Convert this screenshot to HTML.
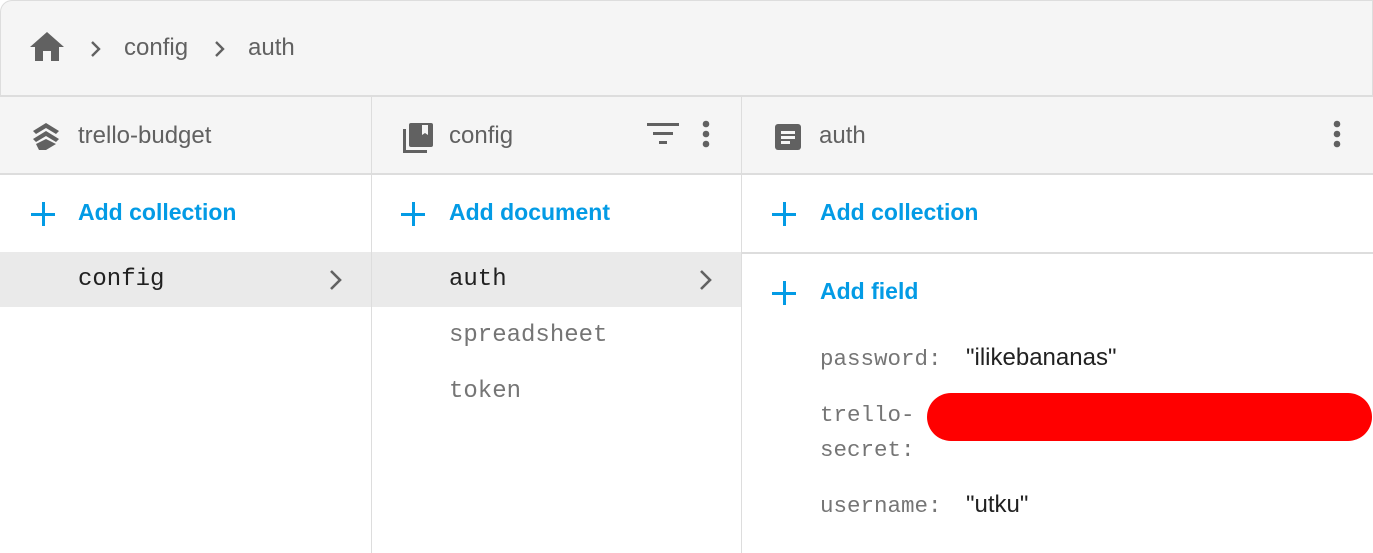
<!DOCTYPE html>
<html><head><style>
*{margin:0;padding:0;box-sizing:border-box}
body{width:1373px;height:553px;background:#fff;font-family:"Liberation Sans",sans-serif;overflow:hidden;position:relative}
.top{position:absolute;left:0;top:0;width:1373px;height:97px;background:#f5f5f5;border:1px solid #ddd;border-bottom:2px solid #ddd;border-top-left-radius:12px}
.t{position:absolute;white-space:nowrap}
.hdr{position:absolute;top:97px;height:78px;background:#f5f5f5;border-bottom:2px solid #ddd}
.vl{position:absolute;top:97px;bottom:0;width:1px;background:#ddd}
.gray{color:#616161;font-size:24px}
.blue{color:#039be5;font-size:23px;font-weight:bold}
.mono{font-family:"Liberation Mono",monospace;font-size:24px;color:#212121}
.plus{position:absolute;width:24px;height:24px}
.plus:before{content:"";position:absolute;left:11px;top:0;width:3px;height:24px;background:#039be5}
.plus:after{content:"";position:absolute;top:11px;left:0;width:24px;height:3px;background:#039be5}
.key{font-family:"Liberation Mono",monospace;font-size:22.5px;color:#757575}
.val{font-size:24px;color:#212121}
</style></head><body>
<div class="top"></div>
<svg class="t" style="left:29px;top:30px" width="36" height="32" viewBox="0 0 36 32"><path d="M18 2 L35 17 H30 V31 H22 V21 H14 V31 H6 V17 H1 Z" fill="#616161"/></svg>
<svg class="t" style="left:89px;top:40px" width="14" height="18"><path d="M3 2 L10 9 L3 16" stroke="#616161" stroke-width="2.4" fill="none"/></svg>
<div class="t gray" style="left:124px;top:34px">config</div>
<svg class="t" style="left:213px;top:40px" width="14" height="18"><path d="M3 2 L10 9 L3 16" stroke="#616161" stroke-width="2.4" fill="none"/></svg>
<div class="t gray" style="left:248px;top:34px">auth</div>

<div class="hdr" style="left:0;width:1373px"></div>
<div class="vl" style="left:371px"></div>
<div class="vl" style="left:741px"></div>
<div style="position:absolute;left:742px;top:252px;width:631px;height:2px;background:#ddd"></div>
<div style="position:absolute;left:0;top:252px;width:371px;height:55px;background:#eaeaea"></div>
<div style="position:absolute;left:372px;top:252px;width:369px;height:55px;background:#eaeaea"></div>

<svg class="t" style="left:31px;top:122px" width="30" height="30" viewBox="0 0 30 30"><path d="M15 1 L28 9 L25 12 L15 6 L5 12 L2 9Z M15 9 L28 17 L25 20 L15 14 L5 20 L2 17Z M5 22 L15 17 L25 22 L15 28 L8 28 Z" fill="#616161"/></svg>
<div class="t gray" style="left:78px;top:122px">trello-budget</div>
<svg class="t" style="left:402px;top:122px" width="32" height="32" viewBox="0 0 32 32"><path d="M1 7 H4 V28 H25 V31 H1 Z" fill="#616161"/><rect x="7" y="1" width="24" height="24" rx="2" fill="#616161"/><path d="M20 3 V13 L23 11 L26 13 V3Z" fill="#f5f5f5"/></svg>
<div class="t gray" style="left:449px;top:122px">config</div>
<svg class="t" style="left:647px;top:122px" width="32" height="26"><rect x="0" y="1" width="32" height="3" fill="#616161"/><rect x="6" y="10" width="20" height="3" fill="#616161"/><rect x="12" y="19" width="8" height="3" fill="#616161"/></svg>
<svg class="t" style="left:700px;top:120px" width="12" height="30"><circle cx="6" cy="4" r="3.3" fill="#616161"/><circle cx="6" cy="14" r="3.3" fill="#616161"/><circle cx="6" cy="24" r="3.3" fill="#616161"/></svg>
<svg class="t" style="left:774px;top:123px" width="28" height="28" viewBox="0 0 28 28"><rect x="1" y="1" width="26" height="26" rx="3" fill="#616161"/><rect x="7" y="8" width="14" height="3" fill="#f5f5f5"/><rect x="7" y="13" width="14" height="3" fill="#f5f5f5"/><rect x="7" y="18" width="9" height="3" fill="#f5f5f5"/></svg>
<div class="t gray" style="left:819px;top:122px">auth</div>
<svg class="t" style="left:1331px;top:120px" width="12" height="30"><circle cx="6" cy="4" r="3.3" fill="#616161"/><circle cx="6" cy="14" r="3.3" fill="#616161"/><circle cx="6" cy="24" r="3.3" fill="#616161"/></svg>

<div class="plus" style="left:31px;top:202px"></div><div class="t blue" style="left:78px;top:199px">Add collection</div>
<div class="plus" style="left:401px;top:202px"></div><div class="t blue" style="left:449px;top:199px">Add document</div>
<div class="plus" style="left:772px;top:202px"></div><div class="t blue" style="left:820px;top:199px">Add collection</div>
<div class="plus" style="left:772px;top:281px"></div><div class="t blue" style="left:820px;top:278px">Add field</div>

<div class="t mono" style="left:78px;top:266px">config</div>
<svg class="t" style="left:328px;top:269px" width="16" height="22"><path d="M3 2 L12 11 L3 20" stroke="#616161" stroke-width="2.6" fill="none"/></svg>
<div class="t mono" style="left:449px;top:266px">auth</div>
<svg class="t" style="left:698px;top:269px" width="16" height="22"><path d="M3 2 L12 11 L3 20" stroke="#616161" stroke-width="2.6" fill="none"/></svg>
<div class="t mono" style="left:449px;top:322px;color:#757575">spreadsheet</div>
<div class="t mono" style="left:449px;top:378px;color:#757575">token</div>

<div class="t key" style="left:820px;top:346px">password:</div><div class="t val" style="left:966px;top:344px">"ilikebananas"</div>
<div class="t key" style="left:820px;top:402px">trello-</div>
<div class="t key" style="left:820px;top:437px">secret:</div>
<div class="t" style="left:927px;top:393px;width:445px;height:48px;background:#f00;border-radius:24px"></div>
<div class="t key" style="left:820px;top:493px">username:</div><div class="t val" style="left:966px;top:491px">"utku"</div>
</body></html>
